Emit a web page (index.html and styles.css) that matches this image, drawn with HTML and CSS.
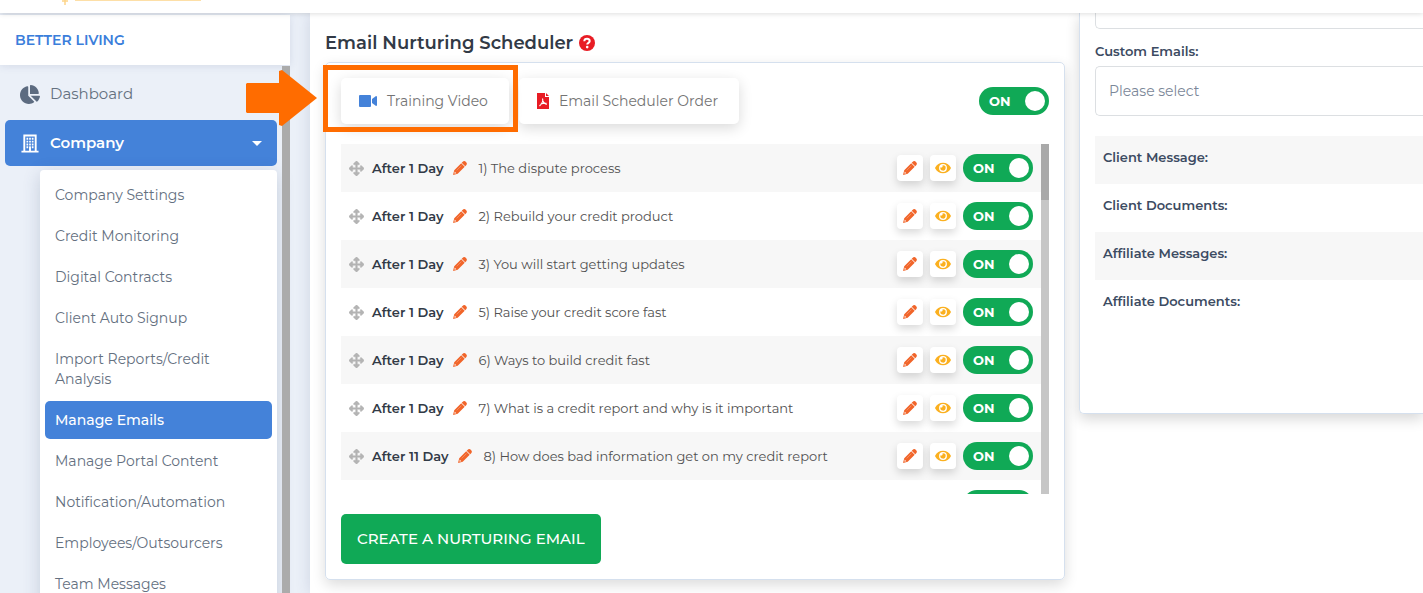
FILE: index.html
```html
<!DOCTYPE html>
<html lang="en">
<head>
<meta charset="utf-8">
<title>Email Nurturing Scheduler</title>
<link rel="stylesheet" href="styles.css">
</head>
<body>
<svg class="sprite" aria-hidden="true">
  <symbol id="pencil" viewBox="0 0 14 14"><path fill="currentColor" d="M9.500 1Q11.200-.8 13 1T13 4.500L12.200 5.300 8.700 1.800zM8.200 2.300L11.700 5.800 4.700 12.800 0 14 1.200 9.300z"/><path d="M1.800 10.600L3.400 12.200 1.800 12.700 1.300 12.200z" fill="#fff" opacity=".8"/><path d="M3.600 9.400L8.400 4.600" stroke="#fff" stroke-width=".5" opacity=".5"/></symbol>
  <symbol id="eye" viewBox="0 0 576 512"><path fill="currentColor" d="M572 241C518 136 411 64 288 64S58 136 3 241a32 32 0 0 0 0 30c55 105 162 177 285 177s230-72 284-177a32 32 0 0 0 0-30zM288 400a144 144 0 1 1 144-144 144 144 0 0 1-144 144zm0-240a95 95 0 0 0-25 4 48 48 0 0 1-67 67 96 96 0 1 0 92-71z"/></symbol>
  <symbol id="move" viewBox="0 0 512 512"><path fill="currentColor" stroke="currentColor" stroke-width="16" d="M352 426l-79 79c-10 9-25 9-34 0l-79-79c-15-15-4-41 17-41h51V284H127v51c0 21-26 32-41 17L7 273c-9-9-9-24 0-34l79-79c15-15 41-4 41 17v51h101V127h-51c-21 0-32-26-17-41l79-79c9-9 24-9 34 0l79 79c15 15 4 41-17 41h-51v101h101v-51c0-21 26-32 41-17l79 79c9 10 9 25 0 34l-79 79c-15 15-41 4-41-17v-51H284v101h51c21 0 32 26 17 41z"/></symbol>
</svg>

<header class="topbar">
  <svg class="logo-edge" viewBox="0 0 142 5" aria-hidden="true"><path d="M4 0v5M1 1h6M14 0h126" fill="none" stroke="#fdd58a" stroke-width="1.500"/></svg>
</header>

<div class="layout">
  <aside class="sidebar">
    <div class="brand">BETTER LIVING</div>
    <div class="side-body">
      <nav class="nav">
        <a class="nav-link" href="#"><svg viewBox="0 0 544 512"><path fill="currentColor" d="M528 288H290l158 158c6 6 16 7 23 1 39-36 65-87 73-142 1-9-7-17-16-17zm-16-65C503 101 411 9 289 0c-9-1-17 7-17 16v224h224c9 0 17-8 16-17zM224 288V50c0-9-8-17-17-16C87 51-4 156 0 282c5 129 115 232 244 230 51-1 98-17 136-44 8-6 9-17 2-24z"/></svg><span>Dashboard</span></a>
        <button class="nav-link company" type="button"><svg viewBox="0 0 18 20"><path fill="none" stroke="currentColor" stroke-width="2" d="M3 18V1.500h12V18M0 18.500h18"/><path fill="none" stroke="currentColor" stroke-width="1.800" stroke-dasharray="2 1" d="M6.200 4v11M9 4v11M11.800 4v11"/><path d="M8 14h2v4H8z" fill="currentColor"/></svg><span>Company</span><i class="caret"></i></button>
        <ul class="submenu">
          <li><a href="#">Company Settings</a></li>
          <li><a href="#">Credit Monitoring</a></li>
          <li><a href="#">Digital Contracts</a></li>
          <li><a href="#">Client Auto Signup</a></li>
          <li><a href="#">Import Reports/Credit Analysis</a></li>
          <li><a class="current" href="#">Manage Emails</a></li>
          <li><a href="#">Manage Portal Content</a></li>
          <li><a href="#">Notification/Automation</a></li>
          <li><a href="#">Employees/Outsourcers</a></li>
          <li><a href="#">Team Messages</a></li>
        </ul>
      </nav>
      <div class="side-scroll"></div>
    </div>
  </aside>

  <main class="content">
    <section class="scheduler">
      <h1>Email Nurturing Scheduler
        <svg viewBox="0 0 16 16" role="img" aria-label="Help"><circle cx="8" cy="8" r="8" fill="#e81c24"/><path d="M5.300 6.200C5.400 3 10.800 3 10.700 6.100 10.600 7.900 8.200 7.800 8.200 9.600" fill="none" stroke="#fff" stroke-width="2"/><circle cx="8.200" cy="12.100" r="1.300" fill="#fff"/></svg>
      </h1>
      <div class="card">
        <div class="toolbar">
          <div class="highlighted">
            <button class="tool" type="button"><svg class="video" viewBox="0 0 18 12"><rect width="12" height="12" rx="1" fill="#4482d9"/><path d="M13 4l4-3q1 0 1 1v8q0 1-1 1l-4-3z" fill="#4482d9"/></svg>Training Video</button>
            <span class="callout"></span>
            <svg class="arrow" viewBox="0 0 71 56" aria-hidden="true"><path fill="#ff6c00" d="M1 13H33V1L36 0 71 28 36 56 33 55V43H1L0 42V14z"/></svg>
          </div>
          <button class="tool" type="button"><svg class="pdf" viewBox="0 0 12 16"><path fill="#e81c24" d="M0 0h8v4h4v12H0zM9 0l3 3H9z"/><path fill="none" stroke="#fff" stroke-width="1.100" d="M5.500 5.500c1 2.500-.5 5-3 7.500M5.800 8c.8 2 2 3 4.200 3.200M3.500 11.300c2-.9 4-1.200 6-1"/></svg>Email Scheduler Order</button>
          <label class="switch"><input type="checkbox" checked aria-label="Scheduler"><span>ON</span></label>
        </div>

        <div class="list-wrap">
          <ul class="list" id="list">
            <li class="row"><svg class="move"><use href="#move"/></svg><b>After 1 Day</b><button class="edit" type="button" aria-label="Edit delay"><svg><use href="#pencil"/></svg></button><span class="name">1) The dispute process</span><button class="sq pen" type="button" aria-label="Edit"><svg><use href="#pencil"/></svg></button><button class="sq see" type="button" aria-label="View"><svg><use href="#eye"/></svg></button><label class="switch"><input type="checkbox" checked aria-label="Email 1"><span>ON</span></label></li>
            <li class="row"><svg class="move"><use href="#move"/></svg><b>After 1 Day</b><button class="edit" type="button" aria-label="Edit delay"><svg><use href="#pencil"/></svg></button><span class="name">2) Rebuild your credit product</span><button class="sq pen" type="button" aria-label="Edit"><svg><use href="#pencil"/></svg></button><button class="sq see" type="button" aria-label="View"><svg><use href="#eye"/></svg></button><label class="switch"><input type="checkbox" checked aria-label="Email 2"><span>ON</span></label></li>
            <li class="row"><svg class="move"><use href="#move"/></svg><b>After 1 Day</b><button class="edit" type="button" aria-label="Edit delay"><svg><use href="#pencil"/></svg></button><span class="name">3) You will start getting updates</span><button class="sq pen" type="button" aria-label="Edit"><svg><use href="#pencil"/></svg></button><button class="sq see" type="button" aria-label="View"><svg><use href="#eye"/></svg></button><label class="switch"><input type="checkbox" checked aria-label="Email 3"><span>ON</span></label></li>
            <li class="row"><svg class="move"><use href="#move"/></svg><b>After 1 Day</b><button class="edit" type="button" aria-label="Edit delay"><svg><use href="#pencil"/></svg></button><span class="name">5) Raise your credit score fast</span><button class="sq pen" type="button" aria-label="Edit"><svg><use href="#pencil"/></svg></button><button class="sq see" type="button" aria-label="View"><svg><use href="#eye"/></svg></button><label class="switch"><input type="checkbox" checked aria-label="Email 5"><span>ON</span></label></li>
            <li class="row"><svg class="move"><use href="#move"/></svg><b>After 1 Day</b><button class="edit" type="button" aria-label="Edit delay"><svg><use href="#pencil"/></svg></button><span class="name">6) Ways to build credit fast</span><button class="sq pen" type="button" aria-label="Edit"><svg><use href="#pencil"/></svg></button><button class="sq see" type="button" aria-label="View"><svg><use href="#eye"/></svg></button><label class="switch"><input type="checkbox" checked aria-label="Email 6"><span>ON</span></label></li>
            <li class="row"><svg class="move"><use href="#move"/></svg><b>After 1 Day</b><button class="edit" type="button" aria-label="Edit delay"><svg><use href="#pencil"/></svg></button><span class="name">7) What is a credit report and why is it important</span><button class="sq pen" type="button" aria-label="Edit"><svg><use href="#pencil"/></svg></button><button class="sq see" type="button" aria-label="View"><svg><use href="#eye"/></svg></button><label class="switch"><input type="checkbox" checked aria-label="Email 7"><span>ON</span></label></li>
            <li class="row"><svg class="move"><use href="#move"/></svg><b>After 11 Day</b><button class="edit" type="button" aria-label="Edit delay"><svg><use href="#pencil"/></svg></button><span class="name">8) How does bad information get on my credit report</span><button class="sq pen" type="button" aria-label="Edit"><svg><use href="#pencil"/></svg></button><button class="sq see" type="button" aria-label="View"><svg><use href="#eye"/></svg></button><label class="switch"><input type="checkbox" checked aria-label="Email 8"><span>ON</span></label></li>
            <li class="row last"><label class="switch"><input type="checkbox" checked aria-label="Email 9"></label></li>
          </ul>
          <div class="track"><div class="thumb"></div></div>
        </div>
        <button class="create" type="button">CREATE A NURTURING EMAIL</button>
      </div>
    </section>

    <section class="side-card">
      <div class="select-edge"></div>
      <label class="field-label" for="custom">Custom Emails:</label>
      <select id="custom"><option>Please select</option></select>
      <ul class="settings">
        <li>Client Message:</li>
        <li>Client Documents:</li>
        <li>Affiliate Messages:</li>
        <li>Affiliate Documents:</li>
      </ul>
    </section>
  </main>
</div>
</body>
</html>
```
FILE: styles.css
```css
* { box-sizing: border-box; }
body {
  margin: 0;
  height: 100vh;
  overflow: hidden;
  display: flex;
  flex-direction: column;
  background: #ebf0f8;
  color: #323a46;
  font: 400 14px/20px Montserrat, Inter, sans-serif;
}
ul { list-style: none; margin: 0; padding: 0; }
a { color: inherit; text-decoration: none; }
button { border: 0; padding: 0; background: none; color: inherit; font: inherit; }
svg { flex: none; display: block; }
.sprite { display: none; }

.topbar {
  flex: none;
  height: 13px;
  background: #fff;
  box-shadow: 0 1px 5px rgba(0, 0, 0, .13);
  z-index: 2;
}
.logo-edge { width: 142px; height: 5px; margin-left: 61px; }

.layout { flex: 1; min-height: 0; display: flex; gap: 20px; }
.sidebar { flex: none; width: 290px; display: flex; flex-direction: column; padding-top: 2px; }
.brand {
  padding: 15px;
  background: #fff;
  color: #3b7edb;
  font-weight: 600;
  box-shadow: 0 1px 8px rgba(60, 80, 120, .13);
}
.side-body { flex: 1; min-height: 0; display: flex; gap: 5px; padding-top: 1px; }
.nav { flex: 1; padding: 5px 0 0 5px; }
.side-scroll { width: 8px; background: #ababab; }
.nav-link {
  width: 100%;
  height: 46px;
  display: flex;
  align-items: center;
  padding: 0 15px;
  color: #64707f;
  font-size: 15px;
  border-radius: 5px;
}
.nav-link svg { width: 20px; height: 19px; margin-right: 10px; color: #5c6b80; }
.company { margin: 3px 0 4px; background: #4482d9; color: #fff; font-weight: 600; }
.company svg { color: #fff; }
.caret { margin-left: auto; border: 5px solid transparent; border-top-color: #fff; border-bottom: 0; }
.submenu {
  display: flex;
  flex-direction: column;
  gap: 3px;
  margin-left: 35px;
  padding: 6px 5px;
  background: #fff;
  border-radius: 4px;
  box-shadow: 0 4px 18px rgba(50, 70, 110, .2);
  color: #64707f;
}
.submenu a { display: block; padding: 9px 10px; border-radius: 5px; }
.submenu .current { background: #4482d9; color: #fff; font-weight: 500; }

.content {
  flex: 1;
  min-width: 0;
  display: grid;
  grid-template-columns: minmax(0, 740fr) minmax(0, 344fr);
  gap: 14px;
  align-items: start;
  padding-left: 15px;
  background: #fff;
  box-shadow: 0 0 14px rgba(50, 70, 110, .16);
}
h1 {
  display: flex;
  align-items: center;
  gap: 6px;
  margin: 0;
  padding: 18px 0 7px;
  font-size: 18px;
  line-height: 24px;
  font-weight: 600;
}
h1 svg { width: 16px; height: 16px; }
.card {
  padding: 15px;
  border: 1px solid #d5e0ee;
  border-radius: 5px;
  box-shadow: 0 5px 14px rgba(0, 0, 0, .14);
}
.toolbar { display: flex; align-items: center; gap: 10px; margin-bottom: 20px; }
.tool {
  display: flex;
  align-items: center;
  gap: 10px;
  height: 46px;
  padding: 0 21px 0 18px;
  background: #fff;
  border-radius: 5px;
  color: #747474;
  box-shadow: 0 4px 14px rgba(0, 0, 0, .15);
}
.video { width: 18px; height: 12px; }
.pdf { width: 12px; height: 16px; }
.highlighted { position: relative; }
.callout { position: absolute; inset: -13px -9px -8px -18px; border: 5px solid #ff6c00; }
.arrow { position: absolute; left: -95px; top: -8px; width: 71px; height: 56px; }

.switch { position: relative; flex: none; width: 70px; height: 28px; }
.toolbar .switch { margin-left: auto; }
.switch input {
  appearance: none;
  display: flex;
  justify-content: flex-end;
  width: 100%;
  height: 100%;
  margin: 0;
  padding: 4px;
  border-radius: 14px;
  background: #10a956;
}
.switch input::before { content: ""; width: 20px; height: 20px; border-radius: 50%; background: #fff; }
.switch span { position: absolute; left: 10px; top: 4px; color: #fff; font-size: 13px; font-weight: 700; }

.list-wrap { display: flex; height: 350px; margin-bottom: 20px; overflow: hidden; font-size: 13px; }
.list { flex: 1; min-width: 0; }
.row { display: flex; align-items: center; height: 48px; padding: 0 8px; }
.row:nth-child(odd) { background: #f7f7f7; }
.row b { font-weight: 600; }
.row.last { justify-content: flex-end; }
.move { width: 15px; height: 15px; margin-right: 8px; color: #b4b4b4; }
.edit { margin: 0 11px 0 10px; color: #f1652a; }
.edit svg, .pen svg { width: 14px; height: 14px; }
.name { flex: 1; min-width: 0; color: #515151; }
.sq {
  display: grid;
  place-items: center;
  width: 26px;
  height: 26px;
  margin-right: 7px;
  background: #fff;
  border-radius: 4px;
  box-shadow: 0 4px 9px rgba(0, 0, 0, .15);
}
.pen { color: #f1652a; }
.see { color: #fbb01f; }
.see svg { width: 16px; height: 14px; }
.track { width: 8px; background: #c6c6c6; }
.thumb { height: 56px; background: #a9a9a9; }
.create {
  height: 50px;
  padding: 0 16px;
  border-radius: 5px;
  background: #10a956;
  color: #fff;
  font-size: 15px;
  font-weight: 500;
}

.side-card {
  padding: 0 0 85px 15px;
  border: solid #d5e0ee;
  border-width: 0 0 1px 1px;
  border-radius: 0 0 0 5px;
  box-shadow: 0 5px 14px rgba(0, 0, 0, .16);
  color: #3c4b62;
}
.select-edge { height: 16px; border: solid #dcdfe2; border-width: 0 0 1px 1px; border-radius: 0 0 0 5px; }
.field-label { display: block; padding: 12px 0 5px; font-size: 13px; font-weight: 600; }
select {
  appearance: none;
  display: block;
  width: 100%;
  height: 50px;
  padding: 0 13px;
  border: 1px solid #dcdfe2;
  border-right: 0;
  border-radius: 5px 0 0 5px;
  background: #fff;
  color: #7b8798;
  font: inherit;
}
.settings { margin-top: 20px; font-size: 13px; font-weight: 600; }
.settings li { height: 48px; padding: 11px 8px; }
.settings li:nth-child(odd) { background: #f7f7f7; }
```
